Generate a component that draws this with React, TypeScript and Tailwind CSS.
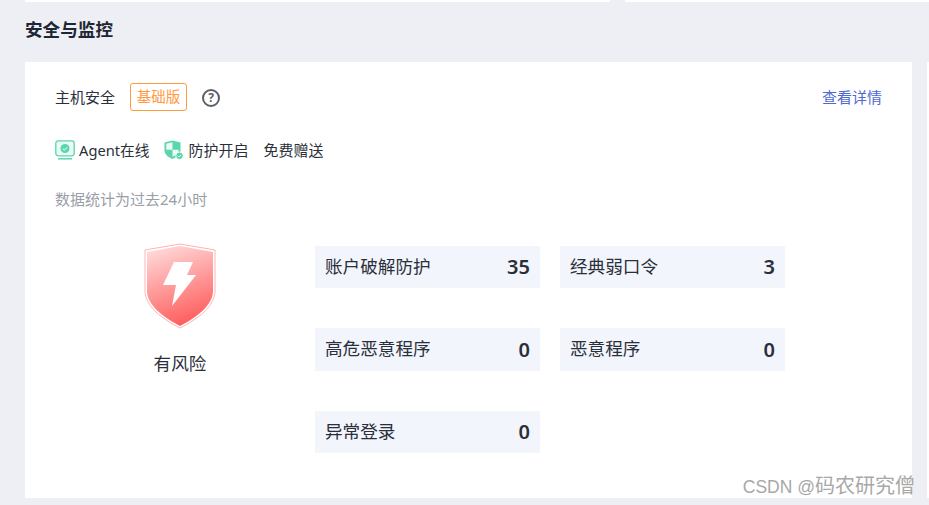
const font = "font-['Noto_Sans','Noto_Sans_CJK_SC',sans-serif]";

const stats = [
  { label: '账户破解防护', value: 35, height: 'h-[42px]' },
  { label: '经典弱口令', value: 3, height: 'h-[42px]' },
  { label: '高危恶意程序', value: 0, height: 'h-[43px]' },
  { label: '恶意程序', value: 0, height: 'h-[43px]' },
  { label: '异常登录', value: 0, height: 'h-[42px]' },
];

function MonitorIcon() {
  return (
    <svg width="20" height="20" viewBox="0 0 20 20" fill="none">
      <rect x="0.8" y="0.8" width="18.400" height="15" rx="2.5" fill="#eafaf4" stroke="#5ad6ad" strokeWidth="1.3" />
      <circle cx="10" cy="8.500" r="4.500" fill="#5ad6ad" />
      <path d="M7.800 8.600l1.600 1.500 2.800-2.800" stroke="#fff" strokeWidth="1" />
      <path d="M3 18.800h14" stroke="#5ad6ad" strokeWidth="1.500" />
    </svg>
  );
}

function ShieldCheckIcon() {
  return (
    <svg width="20" height="20" viewBox="0 0 20 20" fill="none">
      <path d="M0.500 2.500 8.500 0.500l8 2v8c0 4-4 7-8 8.500-4-1.500-8-4.500-8-8.500z" fill="#5ad6ad" />
      <path d="M8.500 2.300v7.500H2.300V3.800zM8.500 9.800h6.200c0 1.500-.4 2.800-1.500 3.800L8.500 16.900z" fill="#fff" fillOpacity="0.88" />
      <circle cx="15.500" cy="15.800" r="3.800" fill="#5ad6ad" stroke="#fff" strokeWidth="1" />
      <path d="M13.800 15.800l1.200 1.200 2-2" stroke="#fff" strokeWidth="1" />
    </svg>
  );
}

function RiskShield() {
  return (
    <svg width="72" height="86" viewBox="0 0 72 86" fill="none">
      <defs>
        <linearGradient id="riskFill" x1="0.3" y1="0" x2="0.6" y2="1">
          <stop offset="0" stopColor="#ffd6d6" />
          <stop offset="1" stopColor="#ff5a5a" />
        </linearGradient>
      </defs>
      <path d="M1 7 36 1l35 6v41c0 15-17 28-35 37C18 76 1 63 1 48z" fill="#fff" stroke="#ffb4b4" strokeWidth="1" />
      <path d="M3 9 36 3l33 6v39c0 14-16 26-33 35C19 74 3 62 3 48z" fill="url(#riskFill)" />
      <path d="M30 19h19l-6 13h9L28 63l4-21H19z" fill="#fff" />
    </svg>
  );
}

export default function App() {
  return (
    <div className={`relative w-[929px] h-[505px] overflow-hidden bg-[#eeeff4] ${font}`}>
      <div className="flex h-[2px] pl-[25px] gap-[15px]">
        <div className="w-[585px] bg-white" />
        <div className="flex-1 bg-white" />
      </div>

      <h2 className="h-[60px] pl-[25px] pt-[14px] text-[17.6px] leading-[26px] font-bold text-[#1f2633]">
        安全与监控
      </h2>

      <div className="flex pl-[25px] gap-[15px]">
        <div className="w-[887px] h-[436px] bg-white px-[30px] pt-[21px]">
          <div className="flex items-center justify-between h-[28px]">
            <div className="flex items-center">
              <span className="text-[15px] text-[#2a2f3a]">主机安全</span>
              <span className="ml-[15px] w-[57px] h-[28px] flex items-center justify-center border border-[#ff9a3e] rounded-[3px] text-[14.5px] text-[#ff9a3e]">
                基础版
              </span>
              <span className="ml-[15px] w-[18px] h-[18px] mt-[1px] flex items-center justify-center rounded-full border-2 border-[#5a5f69] text-[12px] leading-none font-bold text-[#5a5f69]">
                ?
              </span>
            </div>
            <a className="text-[15px] text-[#4f68d2]">查看详情</a>
          </div>

          <div className="flex items-center mt-[28px] h-[22px] text-[15px] text-[#2a2f3a]">
            <MonitorIcon />
            <span className="ml-[4px] text-[14.7px]">Agent在线</span>
            <span className="ml-[15px] flex"><ShieldCheckIcon /></span>
            <span className="ml-[4px]">防护开启</span>
            <span className="ml-[15px]">免费赠送</span>
          </div>

          <p className="mt-[28px] text-[15px] leading-[20px] text-[#9a9ea8]">数据统计为过去24小时</p>

          <div className="flex mt-[37px]">
            <div className="w-[250px] flex flex-col items-center -mt-[3px]">
              <RiskShield />
              <span className="mt-[21px] text-[17.6px] leading-[26px] text-[#2a2f3a]">有风险</span>
            </div>
            <div className="grid grid-cols-[225px_225px] gap-x-[20px] gap-y-[40px] content-start pl-[10px]">
              {stats.map((s) => (
                <div key={s.label} className={`${s.height} flex items-center justify-between bg-[#f2f5fc] px-[10px]`}>
                  <span className="text-[17.6px] -mt-[2px] text-[#2a2f3a]">{s.label}</span>
                  <span className="text-[20px] font-semibold text-[#2a2f3a]">{s.value}</span>
                </div>
              ))}
            </div>
          </div>
        </div>
        <div className="flex-1 bg-white" />
      </div>

      <span className="absolute right-[14px] top-[473px] font-['Liberation_Sans','Noto_Sans_CJK_SC',sans-serif] text-[20px] leading-[26px] text-[#a8a8a8]">
        <span className="text-[17.5px]">CSDN @</span>码农研究僧
      </span>
    </div>
  );
}
